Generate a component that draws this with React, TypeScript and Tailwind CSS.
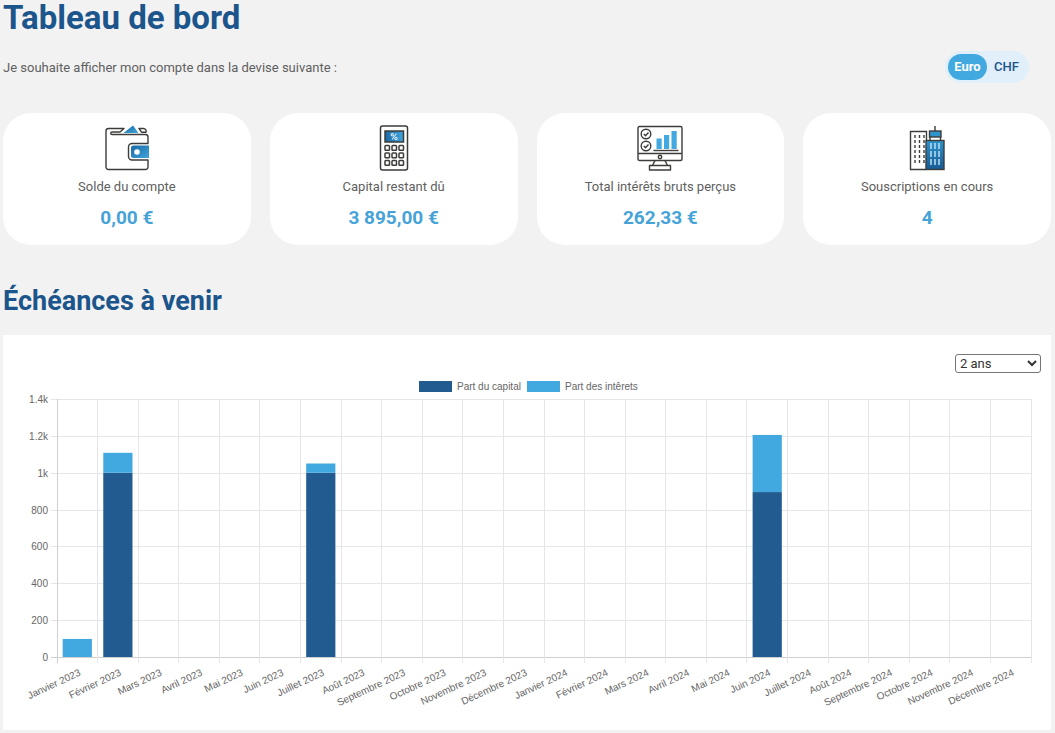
import React, { useState } from "react"

const CAPITAL_COLOR = "#225b90";
const INTEREST_COLOR = "#41a9df";

const MONTHS = [
    "Janvier", "Février", "Mars", "Avril", "Mai", "Juin",
    "Juillet", "Août", "Septembre", "Octobre", "Novembre", "Décembre",
];

const LABELS = [2023, 2024].flatMap((year) => MONTHS.map((month) => `${month} ${year}`));

const PAYMENTS: Record<string, { capital: number; interest: number }> = {
    "Janvier 2023": { capital: 0, interest: 98 },
    "Février 2023": { capital: 1000, interest: 108 },
    "Juillet 2023": { capital: 1000, interest: 50 },
    "Juin 2024": { capital: 895, interest: 310 },
};

const TICKS = ["0", "200", "400", "600", "800", "1k", "1.2k", "1.4k"];

const WalletIcon = () => (
    <svg className="h-[46px] w-[46px]" viewBox="0 0 46 46" fill="none" stroke="#3c3c3b" strokeWidth="1.4" strokeLinecap="round" strokeLinejoin="round">
        <defs>
            <linearGradient id="wallet" x1="0" y1="0" x2="1" y2="1">
                <stop offset="0" stopColor="#1a68a5" />
                <stop offset="1" stopColor="#3fa5da" />
            </linearGradient>
        </defs>
        <path d="M19.500 3.500H4.500A2.500 2.500 0 0 0 2 6V42A2.500 2.500 0 0 0 4.500 44.500H41.500A2.500 2.500 0 0 0 44 42V35H28A3.500 3.500 0 0 1 24.500 31.500V22A3.500 3.500 0 0 1 28 18.500H44V12A2.500 2.500 0 0 0 41.500 9.500H8A1.200 1.200 0 0 1 8 7H16L20 3.500" />
        <path d="M35 3.500H39.500C41.500 3.500 42.500 5.500 42 7.200H37.500Z" />
        <path d="M19.500 8L29 0.500L34.500 8Z" fill="url(#wallet)" stroke="none" />
        <path d="M45 20.500H29.500A2.500 2.500 0 0 0 27 23V30.500A2.500 2.500 0 0 0 29.500 33H45Z" fill="url(#wallet)" stroke="none" />
        <circle cx="33" cy="27" r="2.800" fill="#fff" stroke="none" />
    </svg>
)

const CalculatorIcon = () => (
    <svg className="h-[46px] w-[46px]" viewBox="0 0 46 46" fill="none" stroke="#3c3c3b" strokeWidth="1.5">
        <defs>
            <linearGradient id="screen" x1="0" y1="0" x2="1" y2="0">
                <stop offset="0" stopColor="#1a68a5" />
                <stop offset="1" stopColor="#3fa5da" />
            </linearGradient>
        </defs>
        <rect x="9.500" y="1" width="27" height="44" rx="2" />
        <rect x="14" y="6" width="18.500" height="11" fill="url(#screen)" />
        <g stroke="#d5ecf8" strokeWidth="1.100">
            <circle cx="21.300" cy="9.800" r="1.200" />
            <circle cx="25" cy="13.500" r="1.200" />
            <path d="M25.500 8.500L21 14.500" />
        </g>
        {[20.5, 28, 35.5].map((y) =>
            [14, 21, 28].map((x) => (
                <rect key={`${x}-${y}`} x={x} y={y} width="4.500" height="4.800" rx="0.800" />
            ))
        )}
    </svg>
)

const MonitorIcon = () => (
    <svg className="h-[46px] w-[46px]" viewBox="0 0 46 46" fill="none" stroke="#3c3c3b" strokeWidth="1.4" strokeLinejoin="round">
        <rect x="1" y="1.500" width="44" height="34" rx="1.500" />
        <path d="M1 28.500H45" />
        <circle cx="23" cy="32" r="1.700" />
        <path d="M18 35.500L15.500 40.500M28 35.500L30.500 40.500" />
        <rect x="12.500" y="40.500" width="21" height="4.500" />
        <circle cx="9" cy="9" r="4.800" />
        <path d="M6.800 9L8.500 10.700L11.500 7.500" />
        <circle cx="9" cy="21" r="4.800" />
        <path d="M6.800 21L8.500 22.700L11.500 19.500" />
        <path d="M16.500 25.500H41.500" />
        <g fill="#41a9df" stroke="none">
            <rect x="19.500" y="13.500" width="5.200" height="10.500" />
            <rect x="27" y="10" width="5.200" height="14" />
            <rect x="34.500" y="6" width="5.200" height="18" />
        </g>
    </svg>
)

const BuildingsIcon = () => (
    <svg className="h-[46px] w-[46px]" viewBox="0 0 46 46" fill="none" stroke="#3c3c3b" strokeWidth="1.4">
        <defs>
            <linearGradient id="tower" x1="0" y1="0" x2="0" y2="1">
                <stop offset="0" stopColor="#2f93cc" />
                <stop offset="1" stopColor="#175a94" />
            </linearGradient>
        </defs>
        <path d="M22 44.500H6.500V6.500H22.500V15" />
        {[10, 15, 20, 25, 30, 35].map((y) => (
            <path key={y} d={`M11 ${y}v3M15.500 ${y}v3M20 ${y}v3`} />
        ))}
        <path d="M31 1V6" />
        <rect x="25.500" y="6" width="11.500" height="6" fill="#2f93cc" />
        <path d="M26 12V15.500M36.500 12V15.500" />
        <rect x="22" y="15.500" width="18" height="29" fill="url(#tower)" />
        {[18, 26, 34].map((y) => (
            <path key={y} d={`M27 ${y}v6M31 ${y}v6M35 ${y}v6`} stroke="#c4e5f6" />
        ))}
    </svg>
)

const StatCard = ({ icon, label, value }: { icon: React.ReactNode; label: string; value: string }) => (
    <div className="flex flex-col items-center rounded-[28px] bg-white pt-3 pb-[15px]">
        {icon}
        <p className="mt-[6px] text-[13px] leading-5 text-[#606060]">{label}</p>
        <p className="mt-[9px] text-[19px] leading-6 font-bold text-[#46a3d8]">{value}</p>
    </div>
)

// Plot area inside the viewBox
const LEFT = 44;
const RIGHT = 1018;
const TOP = 26;
const BOTTOM = 284;
const STEP = (RIGHT - LEFT) / LABELS.length;
const scale = (value: number) => (value / 1400) * (BOTTOM - TOP);

const PaymentsChart = () => (
    <svg viewBox="0 0 1028 347" className="block w-full font-['Liberation_Sans',Arial,sans-serif] text-[10px]" fill="#666">
        <rect x="406" y="8" width="33" height="11" fill={CAPITAL_COLOR} />
        <text x="444" y="17">Part du capital</text>
        <rect x="514" y="8" width="33" height="11" fill={INTEREST_COLOR} />
        <text x="552" y="17">Part des intêrets</text>

        {TICKS.map((tick, i) => {
            const y = Math.round(BOTTOM - scale(i * 200)) + 0.5;
            return (
                <g key={tick}>
                    <path d={`M${LEFT - 6} ${y}H${RIGHT}`} stroke={i === 0 ? "#d0d0d0" : "#e6e6e6"} />
                    <text x={LEFT - 9} y={y + 3} textAnchor="end">{tick}</text>
                </g>
            );
        })}

        {Array.from({ length: LABELS.length + 1 }, (_, i) => {
            const x = Math.floor(LEFT + i * STEP) + 0.5;
            return <path key={i} d={`M${x} ${TOP}V${BOTTOM + 6}`} stroke={i === 0 ? "#d0d0d0" : "#e6e6e6"} />;
        })}

        {LABELS.map((label, i) => {
            const payment = PAYMENTS[label];
            const center = LEFT + (i + 0.5) * STEP;
            return (
                <g key={label}>
                    {payment && (
                        <>
                            <rect x={center - 14.6} y={BOTTOM - scale(payment.capital)} width="29.2" height={scale(payment.capital)} fill={CAPITAL_COLOR} />
                            <rect x={center - 14.6} y={BOTTOM - scale(payment.capital + payment.interest)} width="29.2" height={scale(payment.interest)} fill={INTEREST_COLOR} />
                        </>
                    )}
                    <text textAnchor="end" transform={`translate(${center + 4} 302) rotate(-25)`}>{label}</text>
                </g>
            );
        })}
    </svg>
)

const App: React.FC = () => {

    const [currency, setCurrency] = useState("Euro");

    return (
        <main className="min-h-screen bg-[#f2f2f2] pr-1 pb-[3px] pl-[3px] font-[Roboto,sans-serif]">
            <h1 className="text-[33px] leading-9 font-bold text-[#1b558b]">Tableau de bord</h1>

            <div className="mt-[15px] flex items-center justify-between pr-[22px]">
                <p className="pt-[2px] text-[13px] leading-5 text-[#606060]">Je souhaite afficher mon compte dans la devise suivante :</p>
                <div role="radiogroup" aria-label="Devise" className="flex rounded-full bg-[#e0effa] p-[3px]">
                    {["Euro", "CHF"].map((name) => (
                        <label key={name} className="relative flex h-[26px] w-[39px] cursor-pointer items-center justify-center rounded-full text-[13px] font-medium text-[#1b558b] has-checked:bg-[#41a9df] has-checked:font-bold has-checked:text-white">
                            <input
                                type="radio"
                                name="currency"
                                value={name}
                                checked={currency === name}
                                onChange={() => setCurrency(name)}
                                className="sr-only"
                            />
                            {name}
                        </label>
                    ))}
                </div>
            </div>

            <div className="mt-[30px] grid grid-cols-4 gap-[19px]">
                <StatCard icon={<WalletIcon />} label="Solde du compte" value="0,00 €" />
                <StatCard icon={<CalculatorIcon />} label="Capital restant dû" value="3 895,00 €" />
                <StatCard icon={<MonitorIcon />} label="Total intérêts bruts perçus" value="262,33 €" />
                <StatCard icon={<BuildingsIcon />} label="Souscriptions en cours" value="4" />
            </div>

            <h2 className="mt-10 text-[27px] leading-8 font-bold text-[#1b558b]">Échéances à venir</h2>

            <section className="mt-[18px] bg-white px-[10px] pt-[19px] pb-[10px]">
                <div className="flex justify-end">
                    <select aria-label="Période" defaultValue="2" className="h-[19px] w-[86px] rounded-[3px] border border-[#767676] bg-white text-[13px] text-[#333]">
                        <option value="1">1 an</option>
                        <option value="2">2 ans</option>
                        <option value="5">5 ans</option>
                    </select>
                </div>
                <PaymentsChart />
            </section>
        </main>
    )
}

export default App
